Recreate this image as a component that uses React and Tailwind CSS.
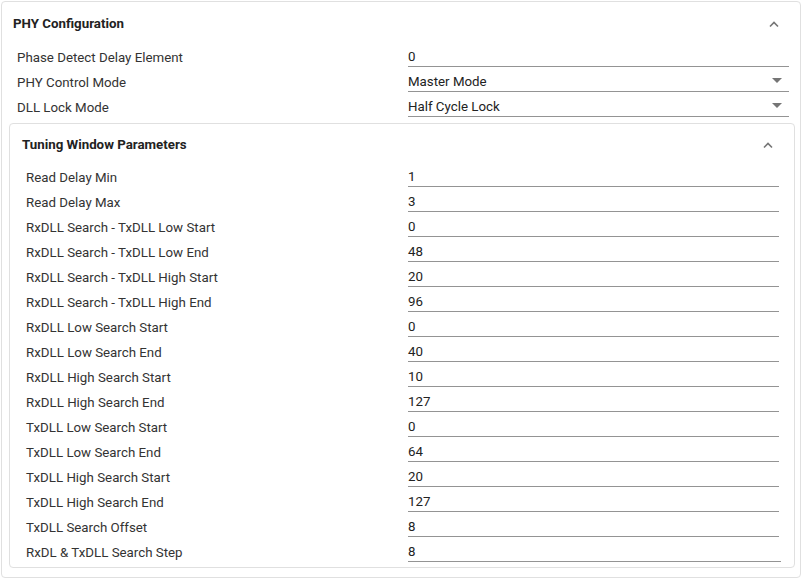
import React from "react";

const Chevron = () => (
  <svg width="12" height="8" viewBox="0 0 12 8" className="block">
    <path d="M2 6.5 L6 2.5 L10 6.5" fill="none" stroke="#757575" strokeWidth="1.6" />
  </svg>
);

const Caret = () => (
  <svg width="10" height="6" viewBox="0 0 10 6" className="block">
    <path d="M0 0 L10 0 L5 5 Z" fill="#757575" />
  </svg>
);

function Row({ label, value, labelW, valueW, select }) {
  return (
    <div className="flex items-center h-[25px]">
      <div className="text-[13.3px] text-[#333] pt-[2px]" style={{ width: labelW }}>{label}</div>
      <div
        className="h-[20px] border-b border-[#949494] flex items-center justify-between text-[13.3px] text-[#222] pr-[7px]"
        style={{ width: valueW }}
      >
        <span className="pt-[2px]">{value}</span>
        {select && <Caret />}
      </div>
    </div>
  );
}

const tuning = [
  ["Read Delay Min", "1"],
  ["Read Delay Max", "3"],
  ["RxDLL Search - TxDLL Low Start", "0"],
  ["RxDLL Search - TxDLL Low End", "48"],
  ["RxDLL Search - TxDLL High Start", "20"],
  ["RxDLL Search - TxDLL High End", "96"],
  ["RxDLL Low Search Start", "0"],
  ["RxDLL Low Search End", "40"],
  ["RxDLL High Search Start", "10"],
  ["RxDLL High Search End", "127"],
  ["TxDLL Low Search Start", "0"],
  ["TxDLL Low Search End", "64"],
  ["TxDLL High Search Start", "20"],
  ["TxDLL High Search End", "127"],
  ["TxDLL Search Offset", "8"],
  ["RxDL & TxDLL Search Step", "8"],
];

export default function App() {
  return (
    <div className="w-[802px] h-[580px] bg-white pt-[1px] pl-[1px]" style={{ fontFamily: "Roboto, 'Liberation Sans', sans-serif" }}>
      <div className="w-[800px] h-[577px] border border-[#e0e0e0] rounded-[4px] bg-white">
        <div className="h-[42px] flex items-center justify-between pl-[11px] pr-[20px] pt-[2px]">
          <div className="text-[13.3px] font-bold text-[#222]">PHY Configuration</div>
          <Chevron />
        </div>
        <div className="pl-[15px]">
          <Row label="Phase Detect Delay Element" value="0" labelW={391} valueW={381} />
          <Row label="PHY Control Mode" value="Master Mode" labelW={391} valueW={381} select />
          <Row label="DLL Lock Mode" value="Half Cycle Lock" labelW={391} valueW={381} select />
        </div>
        <div className="ml-[7px] mt-[4px] w-[786px] h-[445px] border border-[#e0e0e0] rounded-[4px]">
          <div className="h-[40px] flex items-center justify-between pl-[12px] pr-[20px] pt-[2px]">
            <div className="text-[13.3px] font-bold text-[#222]">Tuning Window Parameters</div>
            <Chevron />
          </div>
          <div className="pl-[16px]">
            {tuning.map(([l, v], i) => (
              <Row key={i} label={l} value={v} labelW={382} valueW={i === tuning.length - 1 ? 373 : 371} />
            ))}
          </div>
        </div>
      </div>
    </div>
  );
}
